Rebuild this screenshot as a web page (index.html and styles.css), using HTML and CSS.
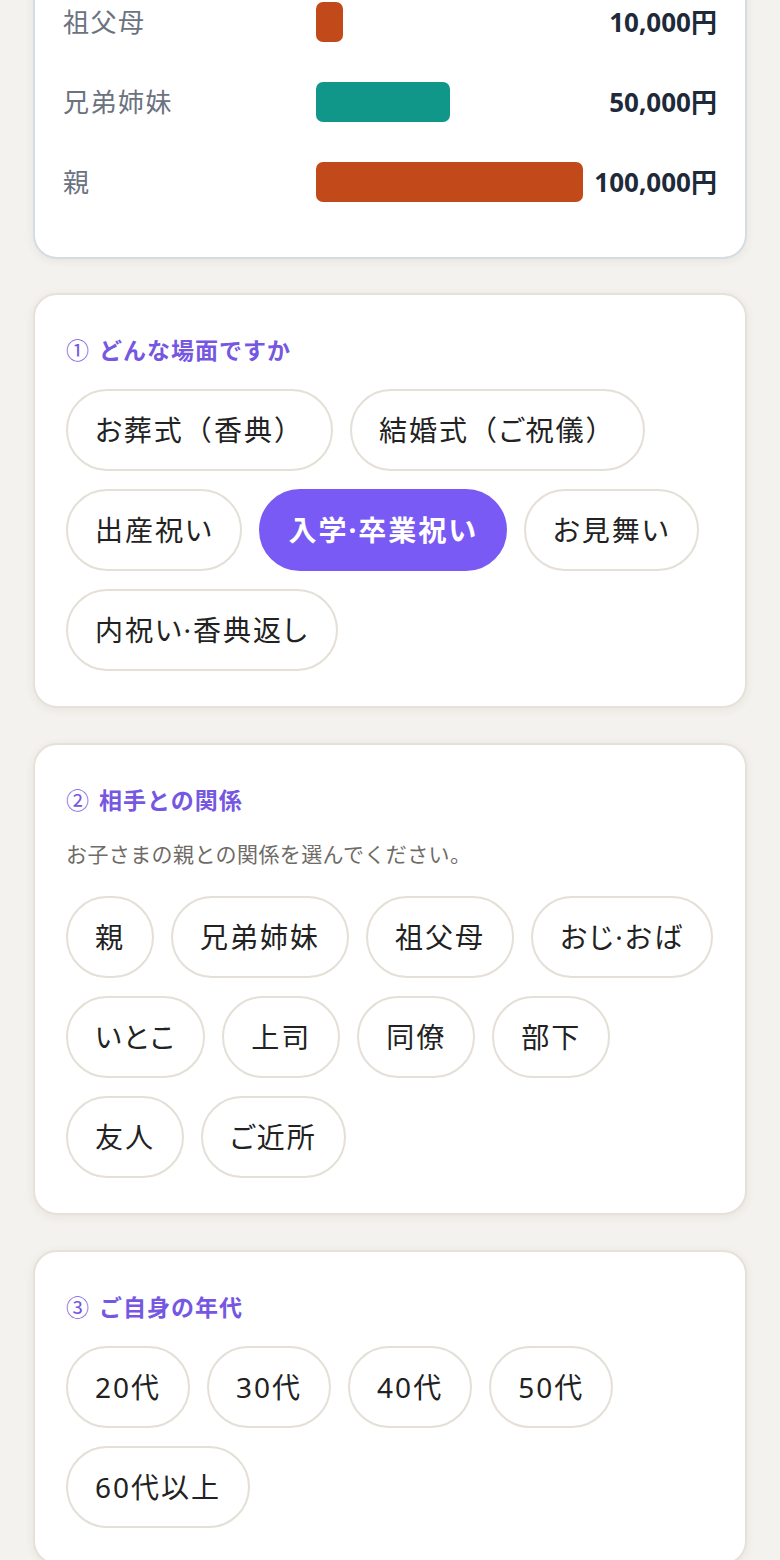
FILE: index.html
```html
<!DOCTYPE html>
<html lang="ja">
<head>
<meta charset="utf-8">
<title>お祝い・香典の相場</title>
<link rel="stylesheet" href="styles.css">
</head>
<body>
<div class="page">
  <section class="card card-chart">
    <div class="chart-row">
      <span class="chart-label">祖父母</span>
      <div class="track"><div class="bar bar-orange" style="width:10%"></div></div>
      <span class="chart-value">10,000円</span>
    </div>
    <div class="chart-row">
      <span class="chart-label">兄弟姉妹</span>
      <div class="track"><div class="bar bar-teal" style="width:50%"></div></div>
      <span class="chart-value">50,000円</span>
    </div>
    <div class="chart-row">
      <span class="chart-label">親</span>
      <div class="track"><div class="bar bar-orange" style="width:100%"></div></div>
      <span class="chart-value">100,000円</span>
    </div>
  </section>

  <section class="card">
    <h2 class="q-title"><span class="q-num">①</span> どんな場面ですか</h2>
    <div class="chips">
      <button class="chip">お葬式<span class="fw">（</span>香典<span class="fw">）</span></button>
      <button class="chip">結婚式<span class="fw">（</span>ご祝儀<span class="fw">）</span></button>
      <button class="chip">出産祝い</button>
      <button class="chip is-active">入学·卒業祝い</button>
      <button class="chip">お見舞い</button>
      <button class="chip">内祝い·香典返し</button>
    </div>
  </section>

  <section class="card">
    <h2 class="q-title"><span class="q-num">②</span> 相手との関係</h2>
    <p class="q-sub">お子さまの親との関係を選んでください。</p>
    <div class="chips">
      <button class="chip">親</button>
      <button class="chip">兄弟姉妹</button>
      <button class="chip">祖父母</button>
      <button class="chip">おじ·おば</button>
      <button class="chip">いとこ</button>
      <button class="chip">上司</button>
      <button class="chip">同僚</button>
      <button class="chip">部下</button>
      <button class="chip">友人</button>
      <button class="chip">ご近所</button>
    </div>
  </section>

  <section class="card">
    <h2 class="q-title"><span class="q-num">③</span> ご自身の年代</h2>
    <div class="chips">
      <button class="chip">20代</button>
      <button class="chip">30代</button>
      <button class="chip">40代</button>
      <button class="chip">50代</button>
      <button class="chip">60代以上</button>
    </div>
  </section>
</div>
</body>
</html>
```

FILE: styles.css
```css
html, body {
  margin: 0;
  padding: 0;
}

body {
  background: #f4f2ee;
  font-family: "Noto Sans", "Noto Sans CJK JP", sans-serif;
  color: #222;
}

.page {
  margin-top: -40px;
  padding: 0 33px 40px;
}

.card {
  background: #fff;
  border: 2px solid #e6e1d9;
  border-radius: 24px;
  padding: 38px 31px 35px;
  margin-bottom: 35px;
  box-shadow: 0 2px 10px rgba(70, 50, 30, 0.07);
}

.card-chart {
  border-color: #d6dce4;
  padding: 40px 28px 55px;
  margin-bottom: 34px;
}

.chart-row {
  display: grid;
  grid-template-columns: 253px 267px 1fr;
  align-items: center;
  height: 40px;
}

.chart-row + .chart-row {
  margin-top: 40px;
}

.chart-label {
  font-size: 26px;
  line-height: 40px;
  letter-spacing: 1.5px;
  color: #6b7280;
}

.track {
  height: 40px;
}

.bar {
  height: 40px;
  border-radius: 7px;
}

.bar-orange {
  background: #c24a1a;
}

.bar-teal {
  background: #11968a;
}

.chart-value {
  text-align: right;
  font-size: 26px;
  line-height: 40px;
  font-weight: 700;
  color: #1e2a3a;
}

.q-title {
  margin: 0 0 22px;
  font-size: 23px;
  line-height: 34px;
  font-weight: 700;
  letter-spacing: 1px;
  color: #7557e2;
}

.q-num {
  font-weight: 400;
  margin-right: 2px;
}

.q-sub {
  margin: 3px 0 27px;
  font-size: 21px;
  line-height: 30px;
  color: #6f6b66;
  letter-spacing: 0.4px;
}

.chips {
  display: flex;
  flex-wrap: wrap;
  gap: 18px 17px;
}

.chip {
  font-family: inherit;
  font-size: 28px;
  line-height: 38px;
  padding: 20px 27px;
  border: 2px solid #e4dfd7;
  border-radius: 999px;
  background: #fff;
  color: #222;
  letter-spacing: 2px;
  font-feature-settings: "palt";
  cursor: pointer;
}

.chip .fw {
  font-feature-settings: normal;
}

.chip.is-active {
  background: #7a5af5;
  border-color: #7a5af5;
  color: #fff;
  font-weight: 700;
}
```
